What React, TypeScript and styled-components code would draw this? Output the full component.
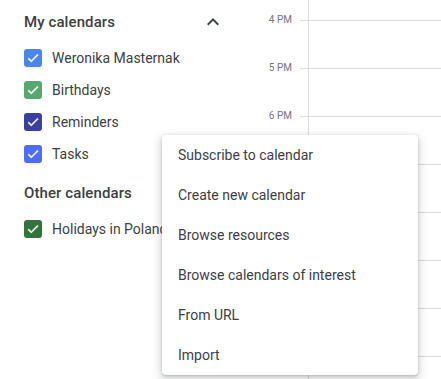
import React from 'react';
import styled, { createGlobalStyle } from 'styled-components';

const GlobalStyle = createGlobalStyle`
    html, body {
        margin:0;
        padding:0;
        background:#fff;
        font-family:Roboto, "Liberation Sans", Arial, sans-serif;
        overflow:hidden;
    }
`

const Page = styled.div`
    position:relative;
    width:441px;
    height:379px;
    display:flex;
    overflow:hidden;
`

const Sidebar = styled.div`
    width:236px;
    flex-shrink:0;
    box-sizing:border-box;
    padding:2px 11px 0 24px;
`

const Section = styled.div<{ $gap?: number }>`
    margin-top:${p => p.$gap || 0}px;
`

const SectionHeader = styled.div`
    height:40px;
    display:flex;
    align-items:center;
    justify-content:space-between;
    font-size:15px;
    font-weight:500;
    color:#3c4043;
    letter-spacing:0.1px;
`

const Row = styled.div`
    height:32px;
    display:flex;
    align-items:center;
    white-space:nowrap;
    font-size:14px;
    color:#3c4043;
    span{
        margin-left:10px;
    }
`

const Box = styled.div<{ $color: string }>`
    width:18px;
    height:18px;
    border-radius:3px;
    background:${p => p.$color};
    display:flex;
    align-items:center;
    justify-content:center;
    flex-shrink:0;
`

const Gutter = styled.div`
    width:72px;
    flex-shrink:0;
    padding-top:20px;
`

const HourMark = styled.div`
    height:48px;
    position:relative;
    display:flex;
    justify-content:flex-end;
    &::after{
        content:'';
        position:absolute;
        right:0;
        top:0;
        width:8px;
        height:1px;
        background:#dadce0;
    }
    label{
        margin-right:16px;
        margin-top:-6px;
        font-size:10px;
        line-height:12px;
        color:#70757a;
    }
`

const Grid = styled.div`
    flex:1;
    border-left:1px solid #dadce0;
    padding-top:20px;
`

const GridRow = styled.div`
    height:47px;
    border-top:1px solid #dadce0;
`

const Menu = styled.div`
    position:absolute;
    left:162px;
    top:135px;
    width:256px;
    background:#fff;
    border-radius:4px;
    box-shadow:0 1px 3px 0 rgba(60,64,67,0.3), 0 4px 8px 3px rgba(60,64,67,0.15);
`

const MenuItem = styled.div`
    height:40px;
    display:flex;
    align-items:center;
    padding:0 16px;
    font-size:14px;
    color:#3c4043;
`

const Check = () => (
    <svg width="14" height="14" viewBox="0 0 24 24">
        <path d="M9 16.2L4.8 12l-1.4 1.4L9 19 21 7l-1.4-1.4L9 16.2z" fill="#fff" stroke="#fff" strokeWidth="1" />
    </svg>
)

const ChevronUp = () => (
    <svg width="24" height="24" viewBox="0 0 24 24">
        <path d="M12 8l-6 6 1.41 1.41L12 10.83l4.59 4.58L18 14z" fill="#3c4043" />
    </svg>
)

const myCalendars = [
    { name: 'Weronika Masternak', color: '#4a86e8' },
    { name: 'Birthdays', color: '#57a86f' },
    { name: 'Reminders', color: '#3b3f9e' },
    { name: 'Tasks', color: '#4f6df2' },
]

const hours = ['4 PM', '5 PM', '6 PM', '7 PM', '8 PM', '9 PM', '10 PM', '11 PM']
const menuItems = ['Subscribe to calendar', 'Create new calendar', 'Browse resources', 'Browse calendars of interest', 'From URL', 'Import']

const App = () => {
    return (
        <>
            <GlobalStyle />
            <Page>
                <Sidebar>
                    <Section>
                        <SectionHeader>
                            My calendars
                            <ChevronUp />
                        </SectionHeader>
                        {myCalendars.map(c => (
                            <Row key={c.name}>
                                <Box $color={c.color}><Check /></Box>
                                <span>{c.name}</span>
                            </Row>
                        ))}
                    </Section>
                    <Section $gap={3}>
                        <SectionHeader>Other calendars</SectionHeader>
                        <Row>
                            <Box $color="#33733e"><Check /></Box>
                            <span>Holidays in Poland</span>
                        </Row>
                    </Section>
                </Sidebar>
                <Gutter>
                    {hours.map(h => (
                        <HourMark key={h}><label>{h}</label></HourMark>
                    ))}
                </Gutter>
                <Grid>
                    {hours.map(h => <GridRow key={h} />)}
                </Grid>
                <Menu>
                    {menuItems.map(m => <MenuItem key={m}>{m}</MenuItem>)}
                </Menu>
            </Page>
        </>
    );
};

export default App;
